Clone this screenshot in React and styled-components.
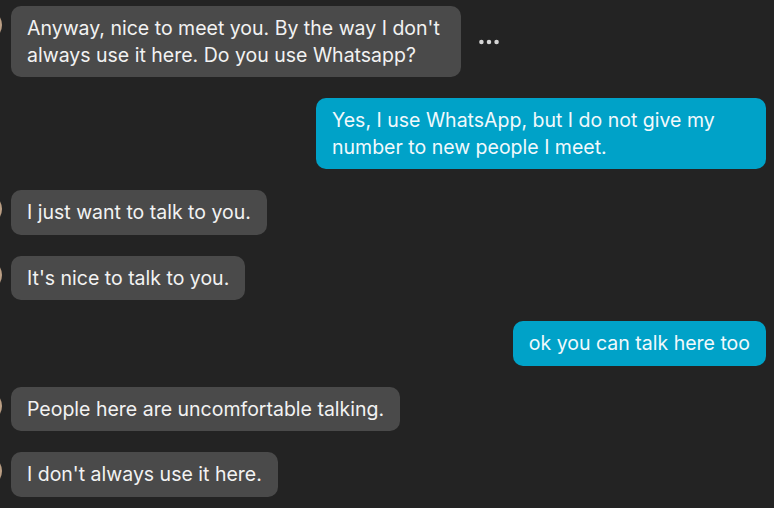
import styled, { createGlobalStyle } from "styled-components";
import { Ellipsis } from "lucide-react";

const messages = [
    { from: "bot", text: "Anyway, nice to meet you. By the way I don't always use it here. Do you use Whatsapp?", menu: true },
    { from: "me", text: "Yes, I use WhatsApp, but I do not give my number to new people I meet." },
    { from: "bot", text: "I just want to talk to you." },
    { from: "bot", text: "It's nice to talk to you." },
    { from: "me", text: "ok you can talk here too" },
    { from: "bot", text: "People here are uncomfortable talking." },
    { from: "bot", text: "I don't always use it here." },
];

export default function App(){
    return(
        <>
            <GlobalStyle/>
            <Chat>
                {messages.map((m, i) => (
                    <Row key={i} mine={m.from === "me"}>
                        {m.from === "bot" && <Avatar/>}
                        <Bubble mine={m.from === "me"}>{m.text}</Bubble>
                        {m.menu && (
                            <MenuButton aria-label="More">
                                <Ellipsis size={26} strokeWidth={2.2}/>
                            </MenuButton>
                        )}
                    </Row>
                ))}
            </Chat>
        </>
    );
}

const GlobalStyle = createGlobalStyle`
    html, body{
        margin: 0;
        padding: 0;
        background: #232323;
        overflow: hidden;
    }
    body{
        font-family: Inter, "Noto Sans", sans-serif;
    }
`;

const Chat = styled.div`
    width: 774px;
    height: 508px;
    box-sizing: border-box;
    padding: 6px 8px 0 0;
    display: flex;
    flex-direction: column;
    gap: 21px;
    overflow: hidden;
`;

const Row = styled.div`
    display: flex;
    align-items: flex-start;
    justify-content: ${(props) => props.mine ? "flex-end" : "flex-start"};
    gap: 9px;
    margin-left: ${(props) => props.mine ? "0" : "-30px"};
`;

const Avatar = styled.div`
    flex: 0 0 32px;
    width: 32px;
    height: 32px;
    margin-top: 3px;
    border-radius: 50%;
    background: radial-gradient(circle at 80% 50%, #c9ad92 0%, #9c7f66 60%, #5a4a3c 100%);
`;

const Bubble = styled.div`
    max-width: 450px;
    box-sizing: border-box;
    padding: 9px 16px;
    border-radius: 10px;
    background: ${(props) => props.mine ? "#00a2c8" : "#4a4a4a"};
    color: ${(props) => props.mine ? "#f1f9fc" : "#f2f2f2"};
    font-size: 19.5px;
    line-height: 26.5px;
    font-weight: 400;
`;

const MenuButton = styled.button`
    align-self: center;
    margin-left: 6px;
    padding: 0;
    border: none;
    background: none;
    color: #d4d4d4;
    display: flex;
`;
